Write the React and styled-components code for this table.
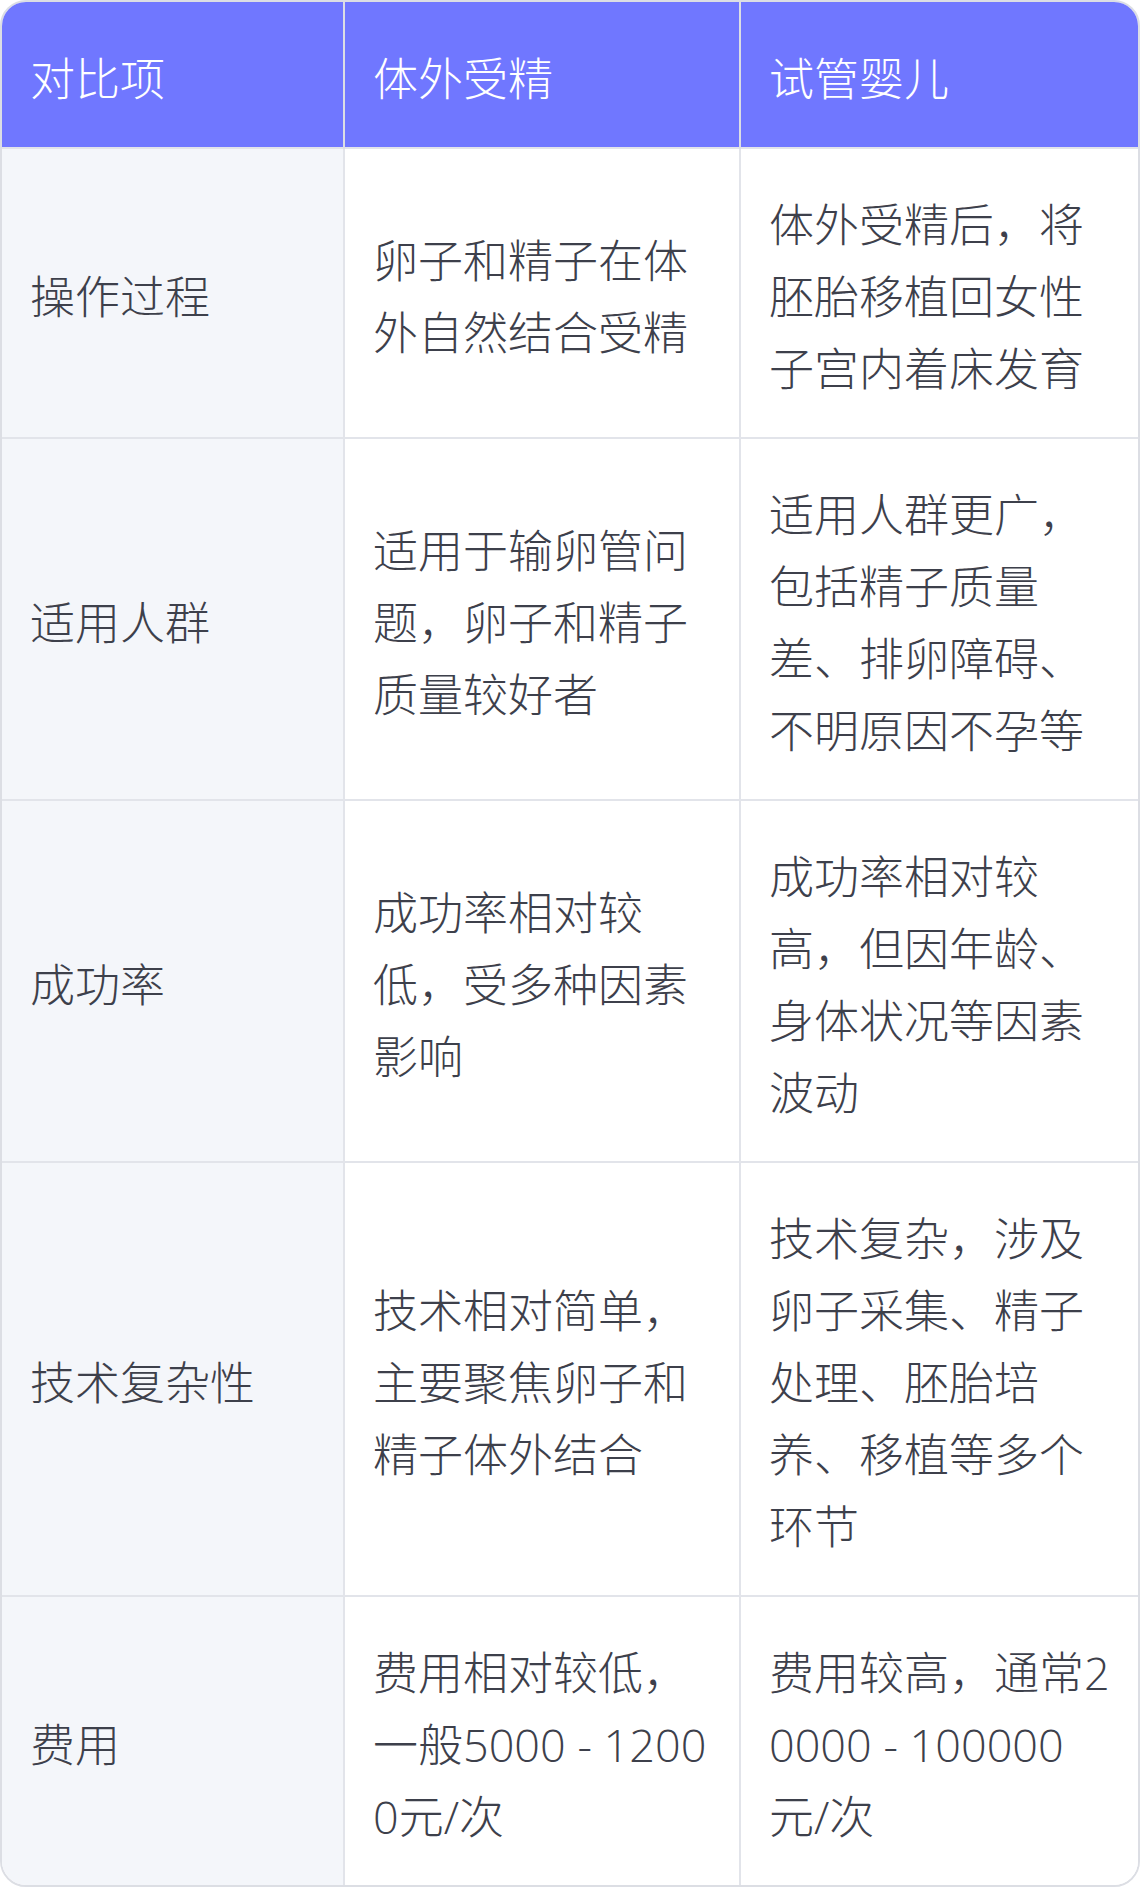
import React from 'react';
import styled, { createGlobalStyle } from 'styled-components';

const GlobalStyle = createGlobalStyle`
  html, body {
    margin: 0;
    padding: 0;
    background: #ffffff;
  }
  body {
    font-family: "Open Sans", "Noto Sans CJK SC", sans-serif;
  }
`;

const Wrapper = styled.div`
  border: 2px solid #dcdee4;
  border-radius: 26px;
  overflow: hidden;
  width: 1140px;
  box-sizing: border-box;
`;

const Table = styled.table`
  width: 100%;
  border-collapse: collapse;
  table-layout: fixed;
`;

const HeadCell = styled.th`
  background: #7077ff;
  color: #ffffff;
  font-size: 45px;
  font-weight: 300;
  line-height: 72px;
  text-align: left;
  padding: 41px 28px 32px;
  border-right: 2px solid #dcdee4;
  &:last-child {
    border-right: none;
  }
`;

const Row = styled.tr`
  border-top: 2px solid #e2e4ea;
`;

const Cell = styled.td`
  background: ${(p) => (p.$label ? '#f4f6fa' : '#ffffff')};
  color: #3d404b;
  font-size: 45px;
  font-weight: 300;
  line-height: 72px;
  text-align: left;
  vertical-align: middle;
  padding: 40px 28px 32px;
  word-break: break-all;
  border-right: 2px solid #e2e4ea;
  &:last-child {
    border-right: none;
  }
`;

const rows = [
  ['操作过程', '卵子和精子在体外自然结合受精', '体外受精后，将胚胎移植回女性子宫内着床发育'],
  ['适用人群', '适用于输卵管问题，卵子和精子质量较好者', '适用人群更广，包括精子质量差、排卵障碍、不明原因不孕等'],
  ['成功率', '成功率相对较低，受多种因素影响', '成功率相对较高，但因年龄、身体状况等因素波动'],
  ['技术复杂性', '技术相对简单，主要聚焦卵子和精子体外结合', '技术复杂，涉及卵子采集、精子处理、胚胎培养、移植等多个环节'],
  ['费用', '费用相对较低，一般5000 - 12000元/次', '费用较高，通常20000 - 100000元/次'],
];

const App = () => (
  <>
    <GlobalStyle />
    <Wrapper>
      <Table>
        <colgroup>
          <col style={{ width: 342 }} />
          <col style={{ width: 396 }} />
          <col style={{ width: 398 }} />
        </colgroup>
        <thead>
          <tr>
            <HeadCell>对比项</HeadCell>
            <HeadCell>体外受精</HeadCell>
            <HeadCell>试管婴儿</HeadCell>
          </tr>
        </thead>
        <tbody>
          {rows.map((r) => (
            <Row key={r[0]}>
              <Cell $label>{r[0]}</Cell>
              <Cell>{r[1]}</Cell>
              <Cell>{r[2]}</Cell>
            </Row>
          ))}
        </tbody>
      </Table>
    </Wrapper>
  </>
);

export default App;
